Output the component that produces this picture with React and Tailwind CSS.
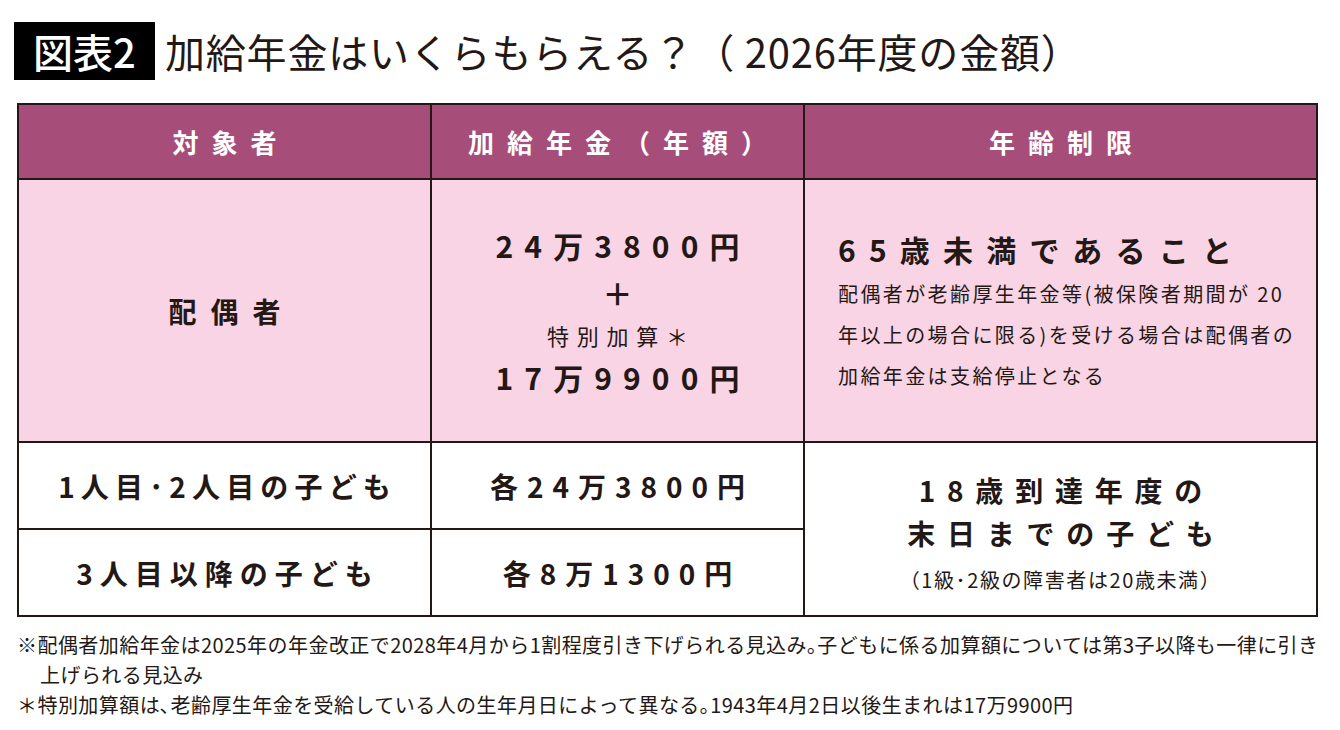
import React from "react";

const cell = " border-r-2 border-b-2 border-[#231815] flex items-center justify-center ";

function Header({ children }) {
  return (
    <div className={cell + " bg-[#a64e79] text-white"}>
      <span className="text-[26px] font-bold tracking-[0.5em] pl-[0.5em] leading-none">{children}</span>
    </div>
  );
}

export default function App() {
  return (
    <div className="w-[1340px] h-[730px] bg-white text-[#231815] font-['Noto_Sans_CJK_JP',sans-serif] overflow-hidden">
      <div className="flex items-center pl-[14px] pt-[22px] gap-[10px]">
        <div className="h-[58px] w-[141px] bg-black text-white flex items-center justify-center text-[40px] font-medium leading-none">
          図表2
        </div>
        <h1 className="text-[40px] leading-none font-normal tracking-[0.02em] whitespace-nowrap">
          加給年金はいくらもらえる？（ 2026年度の金額）
        </h1>
      </div>

      <div className="ml-[17px] mt-[23px] w-[1301px] grid grid-cols-[413px_373px_513px] grid-rows-[75px_263px_87px_87px] border-l-2 border-t-2 border-[#231815]">
        <Header>対象者</Header>
        <Header>加給年金（年額）</Header>
        <Header>年齢制限</Header>

        <div className={cell + " bg-[#f9d4e4]"}>
          <span className="text-[28px] font-bold tracking-[0.5em] pl-[0.5em]">配偶者</span>
        </div>
        <div className={cell + " bg-[#f9d4e4] flex-col"}>
          <div className="text-[30px] font-bold tracking-[0.37em] pl-[0.37em] leading-[44px]">24万3800円</div>
          <div className="text-[30px] font-bold leading-[46px] mt-[2px]">＋</div>
          <div className="text-[22px] tracking-[0.35em] pl-[0.35em] leading-[40px]">特別加算＊</div>
          <div className="text-[30px] font-bold tracking-[0.37em] pl-[0.37em] leading-[44px]">17万9900円</div>
        </div>
        <div className="border-r-2 border-b-2 border-[#231815] bg-[#f9d4e4] flex flex-col justify-center pl-[33px] pt-[4px]">
          <div className="text-[30px] font-bold tracking-[0.44em] leading-[40px] whitespace-nowrap">65歳未満であること</div>
          <div className="text-[20px] tracking-[0.12em] leading-[41px] mt-[4px] whitespace-nowrap">
            配偶者が老齢厚生年金等(被保険者期間が 20
            <br />
            年以上の場合に限る)を受ける場合は配偶者の
            <br />
            加給年金は支給停止となる
          </div>
        </div>

        <div className={cell}>
          <span className="text-[28px] font-bold tracking-[0.22em] pl-[0.22em] whitespace-nowrap">1人目･2人目の子ども</span>
        </div>
        <div className={cell}>
          <span className="text-[28px] font-bold tracking-[0.32em] pl-[0.32em] whitespace-nowrap">各24万3800円</span>
        </div>
        <div className={cell + " row-span-2 flex-col pt-[6px]"}>
          <div className="text-[28px] font-bold tracking-[0.42em] pl-[0.42em] leading-[43px] whitespace-nowrap">18歳到達年度の</div>
          <div className="text-[28px] font-bold tracking-[0.42em] pl-[0.42em] leading-[43px] whitespace-nowrap">末日までの子ども</div>
          <div className="text-[20px] leading-[30px] mt-[10px] tracking-[0.08em] whitespace-nowrap">（1級･2級の障害者は20歳未満）</div>
        </div>

        <div className={cell}>
          <span className="text-[28px] font-bold tracking-[0.25em] pl-[0.25em] whitespace-nowrap">3人目以降の子ども</span>
        </div>
        <div className={cell}>
          <span className="text-[28px] font-bold tracking-[0.32em] pl-[0.32em] whitespace-nowrap">各8万1300円</span>
        </div>
      </div>

      <div className="ml-[17px] mt-[13px] text-[20px] leading-[30px] tracking-[0.022em] whitespace-nowrap">
        <div>※配偶者加給年金は2025年の年金改正で2028年4月から1割程度引き下げられる見込み｡子どもに係る加算額については第3子以降も一律に引き</div>
        <div className="pl-[23px]">上げられる見込み</div>
        <div>＊特別加算額は､老齢厚生年金を受給している人の生年月日によって異なる｡1943年4月2日以後生まれは17万9900円</div>
      </div>
    </div>
  );
}
